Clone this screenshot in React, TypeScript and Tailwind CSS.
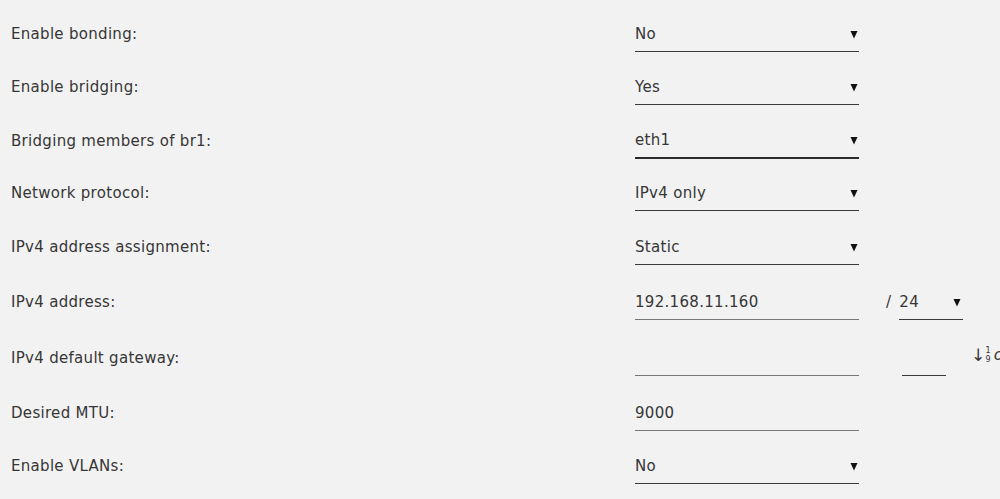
import React from "react";

const font = { fontFamily: '"DejaVu Sans", Verdana, sans-serif' };

function Arrow() {
  return (
    <svg width="8" height="9" viewBox="0 0 8 9" className="shrink-0">
      <path d="M0.5 1 H7.5 L4 8.5 Z" fill="#111" />
    </svg>
  );
}

function Select({ value, thick }: { value: string; thick?: boolean }) {
  return (
    <div
      className={`flex h-[36px] w-[224px] shrink-0 items-center justify-between pr-[1px] pt-[1px] ${
        thick ? "border-b-2 border-[#2a2a2a]" : "border-b border-[#3a3a3a]"
      }`}
    >
      <span>{value}</span>
      <Arrow />
    </div>
  );
}

function Input({ value }: { value?: string }) {
  return (
    <div className="flex h-[36px] w-[224px] shrink-0 items-center border-b border-[#777] pt-[1px]">
      <span>{value ?? ""}</span>
    </div>
  );
}

type Row = { label: string; h: string; control: React.ReactNode };

const rows: Row[] = [
  { label: "Enable bonding:", h: "h-[52px]", control: <Select value="No" /> },
  { label: "Enable bridging:", h: "h-[53px]", control: <Select value="Yes" /> },
  { label: "Bridging members of br1:", h: "h-[54px]", control: <Select value="eth1" thick /> },
  { label: "Network protocol:", h: "h-[52px]", control: <Select value="IPv4 only" /> },
  { label: "IPv4 address assignment:", h: "h-[54px]", control: <Select value="Static" /> },
  {
    label: "IPv4 address:",
    h: "h-[55px]",
    control: (
      <div className="flex shrink-0 items-end">
        <Input value="192.168.11.160" />
        <div className="flex h-[36px] items-center pl-[27px] pr-[8px] pt-[1px]">/</div>
        <div className="flex h-[35px] w-[64px] items-center justify-between border-b border-[#3a3a3a] pr-[2px] pt-[1px]">
          <span>24</span>
          <Arrow />
        </div>
      </div>
    ),
  },
  {
    label: "IPv4 default gateway:",
    h: "h-[56px]",
    control: (
      <div className="flex shrink-0 items-end">
        <Input />
        <div className="ml-[43px] h-[36px] w-[44px] shrink-0 border-b border-[#3a3a3a]" />
        <div className="ml-[25px] flex h-[36px] shrink-0 items-center gap-[3px] pb-[6px]">
          <span className="flex items-end text-[17px] leading-none">
            <span>↓</span>
            <span className="flex flex-col text-[8px] leading-[9px] tracking-normal">
              <span>1</span>
              <span>9</span>
            </span>
          </span>
          <span className="italic text-[16px]">o</span>
        </div>
      </div>
    ),
  },
  { label: "Desired MTU:", h: "h-[55px]", control: <Input value="9000" /> },
  { label: "Enable VLANs:", h: "h-[53px]", control: <Select value="No" /> },
];

export default function App() {
  return (
    <div
      className="h-[499px] w-[1000px] overflow-hidden bg-[#f2f2f2] text-[15px] tracking-[0.3px] text-[#363636]"
      style={font}
    >
      {rows.map((r) => (
        <div key={r.label} className={`flex items-end ${r.h}`}>
          <div className="flex h-[36px] w-[635px] shrink-0 items-center pl-[11px] pt-[1px]">
            {r.label}
          </div>
          {r.control}
        </div>
      ))}
    </div>
  );
}
